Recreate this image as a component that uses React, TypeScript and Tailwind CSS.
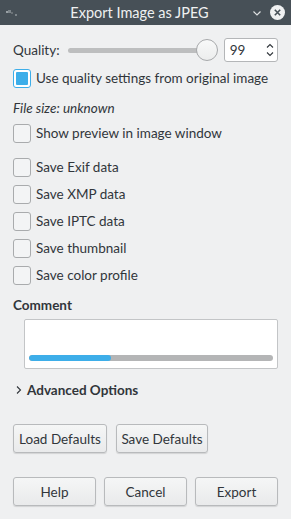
import React from 'react';

const Check = ({ label, checked = false }: { label: string; checked?: boolean }) => (
    <div className="flex h-[19px] items-center gap-[5px] whitespace-nowrap">
        <div
            className={
                checked
                    ? 'flex h-[19px] w-[18px] items-center justify-center rounded-[3px] border border-[#3daee9] bg-white'
                    : 'h-[19px] w-[18px] rounded-[3px] border border-[#a9abad] bg-[#f3f4f5]'
            }
        >
            {checked && <div className="h-[13px] w-[12px] rounded-[1px] bg-[#3daee9]" />}
        </div>
        <span>{label}</span>
    </div>
);

const Btn = ({ label, className }: { label: string; className: string }) => (
    <button
        className={`h-[29px] rounded-[3px] border border-[#b8babc] bg-gradient-to-b from-[#f5f6f6] to-[#e9eaeb] text-[#31363b] shadow-[0_1px_1px_rgba(0,0,0,0.12)] ${className}`}
    >
        {label}
    </button>
);

const App: React.FC = () => {
    return (
        <div
            className="flex h-[519px] w-[291px] flex-col bg-[#eff0f1] text-[13.5px] text-[#31363b]"
            style={{ fontFamily: 'Lato, "Noto Sans", sans-serif' }}
        >
            {/* title bar */}
            <div className="flex h-[25px] items-center bg-[#475057] px-[6px] text-[#eff0f1]">
                <svg width="14" height="10" viewBox="0 0 14 10" className="mt-[1px]">
                    <rect x="0" y="3" width="2" height="2" fill="#9aa1a6" />
                    <rect x="2" y="2" width="3" height="3" fill="#7e868b" />
                    <rect x="5" y="4" width="2" height="2" fill="#6b7277" />
                    <rect x="9" y="6" width="2" height="2" fill="#7e868b" />
                </svg>
                <div className="flex-1 pl-[8px] text-center text-[14.5px]">Export Image as JPEG</div>
                <svg width="12" height="12" viewBox="0 0 12 12" className="mr-[7px]">
                    <path d="M2.5 4.5 L6 8 L9.5 4.5" stroke="#dfe1e2" strokeWidth="1.2" fill="none" />
                </svg>
                <svg width="15" height="15" viewBox="0 0 15 15">
                    <circle cx="7.5" cy="7.5" r="7.5" fill="#eff0f1" />
                    <path d="M4.8 4.8 L10.2 10.2 M10.2 4.8 L4.8 10.2" stroke="#475057" strokeWidth="1.6" />
                </svg>
            </div>

            <div className="flex flex-1 flex-col px-[13px]">
                {/* quality */}
                <div className="mt-[13px] flex h-[24px] items-center">
                    <span>Quality:</span>
                    <div className="relative ml-[8px] flex h-[24px] w-[150px] items-center">
                        <div className="h-[5px] w-full rounded-full bg-[#bdbebf]" />
                        <div className="absolute left-[128px] top-[1px] h-[22px] w-[22px] rounded-full border border-[#a7a9ab] bg-gradient-to-b from-[#f8f9f9] to-[#eceded]" />
                    </div>
                    <div className="ml-[8px] flex h-[24px] w-[55px] items-center rounded-[3px] border border-[#b4b6b8] bg-white pl-[5px]">
                        <span className="flex-1">99</span>
                        <div className="flex flex-col items-center pr-[3px]">
                            <svg width="8" height="8" viewBox="0 0 8 8">
                                <path d="M1 5.5 L4 2.5 L7 5.5" stroke="#31363b" strokeWidth="1.1" fill="none" />
                            </svg>
                            <svg width="8" height="8" viewBox="0 0 8 8">
                                <path d="M1 2.5 L4 5.5 L7 2.5" stroke="#31363b" strokeWidth="1.1" fill="none" />
                            </svg>
                        </div>
                    </div>
                </div>

                <div className="mt-[7px]">
                    <Check label="Use quality settings from original image" checked />
                </div>

                <div className="mt-[12px] italic leading-[16px]">File size: unknown</div>

                <div className="mt-[8px]">
                    <Check label="Show preview in image window" />
                </div>

                <div className="mt-[15px] flex flex-col gap-[8px]">
                    <Check label="Save Exif data" />
                    <Check label="Save XMP data" />
                    <Check label="Save IPTC data" />
                    <Check label="Save thumbnail" />
                    <Check label="Save color profile" />
                </div>

                <div className="mt-[11px] font-bold leading-[18px]">Comment</div>

                <div className="ml-[11px] mt-[5px] flex h-[50px] flex-col justify-end rounded-[2px] border border-[#c3c5c7] bg-white px-[4px] pb-[7px]">
                    <div className="flex h-[6px] w-full overflow-hidden rounded-full bg-[#b4b5b6]">
                        <div className="h-full w-[82px] rounded-full bg-[#3daee9]" />
                    </div>
                </div>

                <div className="mt-[11px] flex items-center gap-[4px] pl-[2px] font-bold">
                    <svg width="8" height="10" viewBox="0 0 8 10">
                        <path d="M2 1.5 L5.5 5 L2 8.5" stroke="#31363b" strokeWidth="1.1" fill="none" />
                    </svg>
                    <span>Advanced Options</span>
                </div>

                <div className="mt-[24px] flex gap-[9px]">
                    <Btn label="Load Defaults" className="w-[94px]" />
                    <Btn label="Save Defaults" className="w-[92px]" />
                </div>

                <div className="mt-[24px] flex gap-[8px]">
                    <Btn label="Help" className="w-[83px]" />
                    <Btn label="Cancel" className="w-[83px]" />
                    <Btn label="Export" className="w-[83px]" />
                </div>
            </div>
        </div>
    );
};

export default App;
